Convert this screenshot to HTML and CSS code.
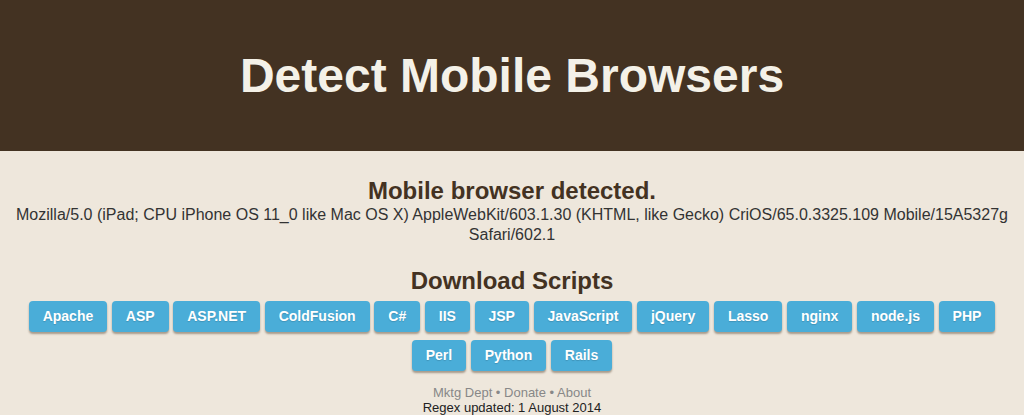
FILE: index.html
```html
<!DOCTYPE html>
<html>
<head>
<meta charset="utf-8">
<title>Detect Mobile Browsers</title>
<link rel="stylesheet" href="styles.css">
</head>
<body>
<header class="masthead">
  <h1 class="title">Detect Mobile Browsers</h1>
</header>
<main class="content">
  <section class="detect">
    <h2 class="heading">Mobile browser detected.</h2>
    <p class="ua">Mozilla/5.0 (iPad; CPU iPhone OS 11_0 like Mac OS X) AppleWebKit/603.1.30 (KHTML, like Gecko) CriOS/65.0.3325.109 Mobile/15A5327g Safari/602.1</p>
  </section>
  <section class="downloads">
    <h2 class="heading">Download Scripts</h2>
    <div class="buttons">
      <a class="btn" href="#">Apache</a>
      <a class="btn" href="#">ASP</a>
      <a class="btn" href="#">ASP.NET</a>
      <a class="btn" href="#">ColdFusion</a>
      <a class="btn" href="#">C#</a>
      <a class="btn" href="#">IIS</a>
      <a class="btn" href="#">JSP</a>
      <a class="btn" href="#">JavaScript</a>
      <a class="btn" href="#">jQuery</a>
      <a class="btn" href="#">Lasso</a>
      <a class="btn" href="#">nginx</a>
      <a class="btn" href="#">node.js</a>
      <a class="btn" href="#">PHP</a>
      <a class="btn" href="#">Perl</a>
      <a class="btn" href="#">Python</a>
      <a class="btn" href="#">Rails</a>
    </div>
  </section>
  <footer class="footer">
    <div class="links"><a href="#">Mktg Dept</a> • <a href="#">Donate</a> • <a href="#">About</a></div>
    <div class="updated">Regex updated: 1 August 2014</div>
  </footer>
</main>
</body>
</html>
```
FILE: styles.css
```css
html, body {
  margin: 0;
  padding: 0;
}
body {
  background: #eee7dc;
  font-family: "Liberation Sans", Arial, sans-serif;
  color: #333;
  text-align: center;
}
.masthead {
  background: #433222;
  height: 151px;
  display: flex;
  align-items: center;
  justify-content: center;
}
.title {
  margin: 0;
  font-size: 48px;
  font-weight: bold;
  color: #f4f1e8;
  line-height: 1;
}
.content {
  padding-top: 26px;
}
.heading {
  margin: 0;
  font-size: 24px;
  line-height: 28px;
  color: #433222;
  font-weight: bold;
}
.ua {
  margin: 0;
  font-size: 16px;
  line-height: 20px;
  color: #333;
  padding: 0 12px;
}
.downloads {
  margin-top: 22px;
}
.buttons {
  display: flex;
  flex-wrap: wrap;
  justify-content: center;
  gap: 8px 4.6px;
  padding: 0 20px;
  margin-top: 6px;
}
.btn {
  display: block;
  background: #4aadd8;
  color: #fff;
  font-weight: bold;
  font-size: 14px;
  line-height: 31px;
  height: 31px;
  padding: 0 14px;
  border-radius: 4px;
  text-decoration: none;
  text-shadow: 0 1px 1px rgba(0, 0, 0, 0.15);
  box-shadow: 0 2px 2px rgba(60, 40, 20, 0.4);
}
.footer {
  margin-top: 14px;
  font-size: 13px;
  line-height: 15px;
}
.links {
  color: #888;
}
.links a {
  color: #888;
  text-decoration: none;
}
.updated {
  color: #222;
}
```
